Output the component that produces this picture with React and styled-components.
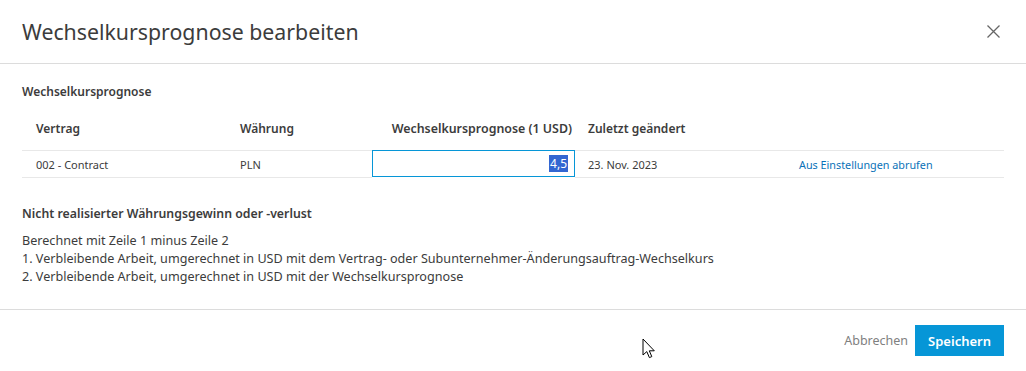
import React from 'react';
import styled, { createGlobalStyle } from 'styled-components';

const GlobalStyle = createGlobalStyle`
  html, body {
    margin: 0;
    padding: 0;
    background: #fff;
  }
  body {
    font-family: "Noto Sans", "Open Sans", sans-serif;
    color: #3c3c3c;
  }
`;

const Dialog = styled.div`
  position: relative;
  width: 1026px;
  height: 371px;
  display: flex;
  flex-direction: column;
  background: #fff;
  overflow: hidden;
`;

const Header = styled.div`
  height: 63px;
  display: flex;
  align-items: center;
  justify-content: space-between;
  padding: 0 22px;
  border-bottom: 1px solid #dcdcdc;
  flex-shrink: 0;
`;

const Title = styled.h1`
  margin: 0;
  font-size: 21.3px;
  font-weight: 400;
  color: #3c3c3c;
`;

const CloseButton = styled.button`
  border: 0;
  background: none;
  padding: 0;
  width: 14px;
  height: 14px;
  margin-right: 4px;
  display: flex;
  align-items: center;
  justify-content: center;
  cursor: pointer;
`;

const Body = styled.div`
  flex: 1;
  padding: 20px 22px 0;
`;

const SectionTitle = styled.h2`
  margin: 0;
  font-size: 12px;
  line-height: 16px;
  font-weight: 600;
  color: #3c3c3c;
`;

const Table = styled.div`
  margin-top: 15px;
  display: grid;
  grid-template-columns: 204px 146px 203px 210px 1fr;
`;

const HeadCell = styled.div`
  height: 36px;
  box-sizing: border-box;
  padding: 6px 14px 0 ${p => (p.$flush ? '13px' : '14px')};
  font-size: 12px;
  line-height: 16px;
  font-weight: 600;
  color: #3c3c3c;
  border-bottom: 1px solid #e8e8e8;
  text-align: ${p => (p.$right ? 'right' : 'left')};
  white-space: nowrap;
  ${p => p.$right && 'padding-right: 3px; padding-left: 0; font-size: 12.4px;'}
`;

const Cell = styled.div`
  height: 27px;
  box-sizing: border-box;
  display: flex;
  align-items: center;
  padding: 0 14px 0 ${p => (p.$flush ? '13px' : '14px')};
  font-size: 11px;
  color: #3c3c3c;
  border-bottom: 1px solid #e8e8e8;
  white-space: nowrap;
`;

const InputCell = styled.div`
  height: 27px;
  margin-top: -1px;
  box-sizing: border-box;
  border: 1px solid #0696d7;
  display: flex;
  align-items: center;
  justify-content: flex-end;
  padding-right: 6px;
  font-size: 12px;
  background: #fff;
`;

const Selected = styled.span`
  background: #3366d1;
  color: #fff;
  line-height: 17px;
  padding: 0 1px;
`;

const LinkText = styled.a`
  color: #0a72b8;
  font-size: 10.8px;
  text-decoration: none;
  cursor: pointer;
`;

const Subtitle = styled(SectionTitle)`
  margin-top: 28px;
  font-size: 12.3px;
`;

const Lines = styled.div`
  margin-top: 10px;
  font-size: 12.6px;
  line-height: 18px;
  color: #3c3c3c;
`;

const Footer = styled.div`
  height: 62px;
  flex-shrink: 0;
  box-sizing: border-box;
  border-top: 1px solid #dcdcdc;
  display: flex;
  justify-content: flex-end;
  align-items: flex-start;
  padding: 15px 22px 0;
`;

const Button = styled.button`
  height: 31px;
  border: 0;
  font-family: inherit;
  font-size: ${p => (p.$primary ? '13px' : '12.5px')};
  padding: 0 ${p => (p.$primary ? '13px' : '7px')};
  background: ${p => (p.$primary ? '#0696d7' : 'transparent')};
  color: ${p => (p.$primary ? '#fff' : '#808080')};
  font-weight: ${p => (p.$primary ? 600 : 400)};
  cursor: pointer;
`;

const Pointer = styled.svg`
  position: absolute;
  left: 642px;
  top: 338px;
`;

const columns = ['Vertrag', 'Währung', 'Wechselkursprognose (1 USD)', 'Zuletzt geändert', ''];

export default function App() {
  return (
    <>
      <GlobalStyle />
      <Dialog>
        <Header>
          <Title>Wechselkursprognose bearbeiten</Title>
          <CloseButton aria-label="Schließen">
            <svg width="13" height="13" viewBox="0 0 13 13">
              <path d="M0.5 0.5 L12.5 12.5 M12.5 0.5 L0.5 12.5" stroke="#666" strokeWidth="1.3" fill="none" />
            </svg>
          </CloseButton>
        </Header>
        <Body>
          <SectionTitle>Wechselkursprognose</SectionTitle>
          <Table>
            <HeadCell>{columns[0]}</HeadCell>
            <HeadCell>{columns[1]}</HeadCell>
            <HeadCell $right>{columns[2]}</HeadCell>
            <HeadCell $flush>{columns[3]}</HeadCell>
            <HeadCell />
            <Cell>002 - Contract</Cell>
            <Cell>PLN</Cell>
            <InputCell>
              <Selected>4,5</Selected>
            </InputCell>
            <Cell $flush>23. Nov. 2023</Cell>
            <Cell>
              <LinkText>Aus Einstellungen abrufen</LinkText>
            </Cell>
          </Table>
          <Subtitle>Nicht realisierter Währungsgewinn oder -verlust</Subtitle>
          <Lines>
            <div>Berechnet mit Zeile 1 minus Zeile 2</div>
            <div>1. Verbleibende Arbeit, umgerechnet in USD mit dem Vertrag- oder Subunternehmer-Änderungsauftrag-Wechselkurs</div>
            <div>2. Verbleibende Arbeit, umgerechnet in USD mit der Wechselkursprognose</div>
          </Lines>
        </Body>
        <Footer>
          <Button>Abbrechen</Button>
          <Button $primary>Speichern</Button>
        </Footer>
        <Pointer width="14" height="22" viewBox="0 0 14 22">
          <path d="M1 1 L1 17 L4.8 13.6 L7.4 19.6 L9.8 18.6 L7.3 12.8 L12.3 12.8 Z" fill="#fff" stroke="#000" strokeWidth="1" strokeLinejoin="round" />
        </Pointer>
      </Dialog>
    </>
  );
}
